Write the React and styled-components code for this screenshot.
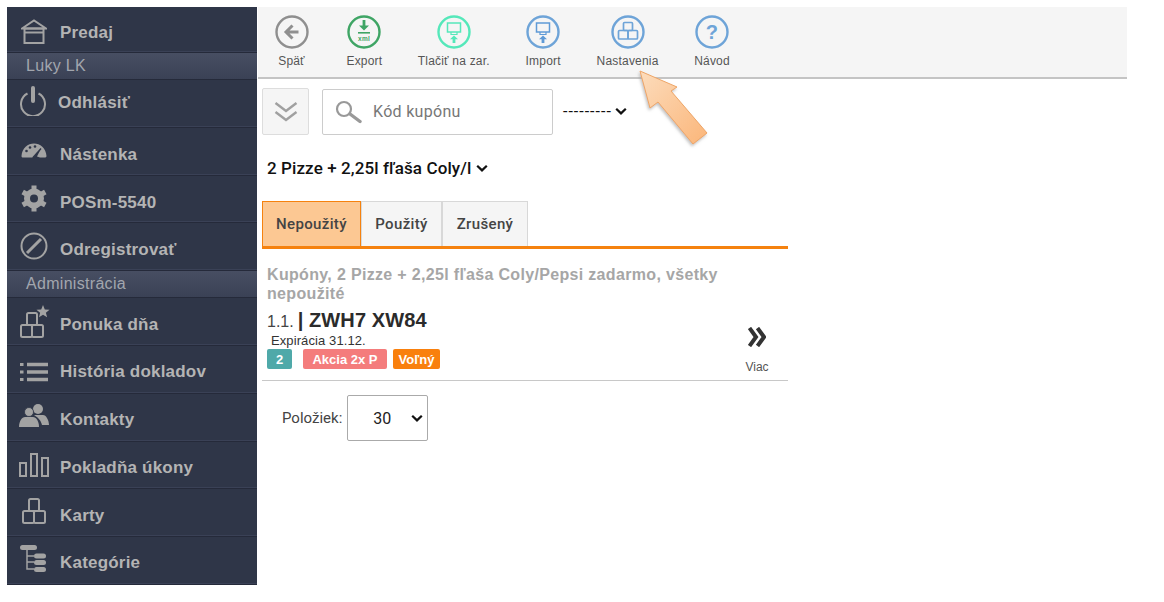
import styled, { createGlobalStyle } from 'styled-components';

const GlobalStyle = createGlobalStyle`
  html, body {
    margin: 0;
    padding: 0;
    background: #fff;
    font-family: "Liberation Sans", Arial, sans-serif;
  }
`;

const Page = styled.div`
  position: relative;
  display: flex;
  align-items: flex-start;
  gap: 1px;
  width: 1164px;
  height: 602px;
  padding: 7px 0 0 7px;
  box-sizing: border-box;
  overflow: hidden;
`;

const Sidebar = styled.nav`
  width: 250px;
  flex: none;
  background: #2f3648;
`;

const NavRow = styled.div`
  display: flex;
  align-items: center;
  height: ${props => props.$height || 47.8}px;
  box-sizing: border-box;
  border-bottom: 1px solid #252a3a;
  box-shadow: inset 0 -1px 0 #3a4156;
  color: #b4b4b4;
  font-size: 17px;
  font-weight: 700;
`;

const NavIcon = styled.span`
  display: flex;
  justify-content: center;
  width: ${props => props.$slot || 53}px;
  flex: none;
  transform: translateY(${props => props.$shift || 0}px);
`;

const NavLabel = styled.span`
  transform: translateY(${props => props.$shift || 0}px);
  letter-spacing: 0.2px;
`;

const SectionRow = styled.div`
  display: flex;
  align-items: center;
  height: 27px;
  box-sizing: border-box;
  padding-left: 19px;
  background: linear-gradient(#474e62, #3a4155);
  border-bottom: 1px solid #252a3a;
  color: #a2a6ae;
  font-size: 16px;
  letter-spacing: 0.3px;
`;

const Main = styled.main`
  width: 869px;
  flex: none;
`;

const Toolbar = styled.div`
  display: flex;
  height: 72px;
  box-sizing: border-box;
  padding: 7px 0 0 14px;
  background: #f5f5f5;
  border-bottom: 2px solid #c4c4c4;
`;

const ToolButton = styled.div`
  display: flex;
  flex-direction: column;
  align-items: center;
  min-width: ${props => props.$minWidth || 0}px;
  margin-right: 35.4px;
  color: #555;
  font-size: 12px;
  letter-spacing: 0.2px;
  white-space: nowrap;
`;

const ToolIcon = styled.svg`
  width: 36px;
  height: 36px;
  margin-bottom: 4px;
`;

const Content = styled.div`
  display: flex;
  flex-direction: column;
  width: 526px;
  margin-left: 4px;
  font-family: Roboto, "Liberation Sans", sans-serif;
`;

const FilterRow = styled.div`
  display: flex;
  align-items: center;
  margin-top: 9px;
`;

const CollapseButton = styled.div`
  display: flex;
  align-items: center;
  justify-content: center;
  width: 47px;
  height: 47px;
  box-sizing: border-box;
  background: #f5f5f5;
  border: 1px solid #ddd;
  border-radius: 2px;
`;

const SearchBox = styled.div`
  display: flex;
  align-items: center;
  gap: 11px;
  width: 231px;
  height: 46px;
  box-sizing: border-box;
  margin-left: 13px;
  padding-left: 12px;
  border: 1px solid #ccc;
  border-radius: 2px;
  color: #777;
  font-size: 16px;
  letter-spacing: 0.3px;
`;

const InlineSelect = styled.div`
  display: flex;
  align-items: center;
  gap: ${props => props.$gap || 0}px;
  margin: ${props => props.$margin || 0};
  color: #111;
  font-size: ${props => props.$size || 16}px;
  font-weight: ${props => props.$weight || 400};
  letter-spacing: ${props => props.$spacing || 0}px;
`;

const Tabs = styled.div`
  display: flex;
  height: 48px;
  box-sizing: border-box;
  margin-top: 23px;
  border-bottom: 3px solid #f5820f;
`;

const Tab = styled.div`
  display: flex;
  align-items: center;
  justify-content: center;
  width: ${props => props.$width}px;
  box-sizing: border-box;
  background: ${props => (props.$active ? '#fcc893' : '#f5f5f5')};
  border: 1px solid ${props => (props.$active ? '#f5820f' : '#d8d8d8')};
  border-bottom: none;
  color: #444;
  font-size: 15px;
  font-weight: 500;
  letter-spacing: 0.35px;
`;

const Heading = styled.h2`
  width: 490px;
  margin: 16px 0 0 5px;
  color: #a6a6a6;
  font-family: "Liberation Sans", Arial, sans-serif;
  font-size: 16px;
  font-weight: 700;
  line-height: 19px;
  letter-spacing: 0.33px;
`;

const CouponRow = styled.div`
  display: flex;
  justify-content: space-between;
  height: 72px;
  box-sizing: border-box;
  margin-top: 6px;
  padding-left: 5px;
  border-bottom: 1px solid #c8c8c8;
  font-family: "Liberation Sans", Arial, sans-serif;
`;

const CouponInfo = styled.div`
  display: flex;
  flex-direction: column;
`;

const CouponTitle = styled.div`
  display: flex;
  align-items: baseline;
  gap: 4px;
  height: 23px;
  color: #444;
  font-size: 16px;
`;

const CouponCode = styled.strong`
  color: #2b2b2b;
  font-size: 20px;
  letter-spacing: 0.1px;
`;

const Expiry = styled.div`
  margin: 2px 0 1px 4px;
  color: #333;
  font-size: 13px;
  line-height: 14px;
  letter-spacing: 0.1px;
`;

const Badges = styled.div`
  display: flex;
`;

const Badge = styled.span`
  display: flex;
  align-items: center;
  justify-content: center;
  width: ${props => props.$width}px;
  height: 20px;
  margin-right: ${props => props.$gap}px;
  background: ${props => props.$color};
  border-radius: 2px;
  color: #fff;
  font-size: 13px;
  font-weight: 700;
`;

const MoreLink = styled.div`
  display: flex;
  flex-direction: column;
  align-items: center;
  width: 26px;
  margin: 18px 18px 0 0;
  color: #555;
  font-size: 12px;
`;

const MoreIcon = styled.svg`
  width: 18px;
  height: 20px;
  margin-bottom: 13px;
`;

const PageSizeRow = styled.div`
  display: flex;
  align-items: center;
  gap: 5px;
  margin: 14px 0 0 20px;
  color: #444;
  font-size: 15px;
`;

const PageSizeBox = styled.div`
  display: flex;
  align-items: center;
  justify-content: space-between;
  width: 81px;
  height: 46px;
  box-sizing: border-box;
  padding: 0 4px 0 25px;
  border: 1px solid #aaa;
  border-radius: 2px;
  color: #222;
  font-size: 16px;
`;

const CalloutArrow = styled.svg`
  position: absolute;
  left: 630px;
  top: 60px;
  width: 90px;
  height: 95px;
`;

const Chevron = ({ size = 12 }) => (
  <svg width={size} height={size * 0.7} viewBox="0 0 12 8">
    <path d="M1.2 1.5 6 6.2l4.8-4.7" fill="none" stroke="#111" strokeWidth="2.2" />
  </svg>
);

const GREY = '#a3a3a3';
const BG = '#2f3648';
const line = { fill: 'none', stroke: GREY, strokeWidth: 2 };

const boxes = (
  <g {...line}>
    <rect x="9" y="2" width="10" height="12" rx="1.5" />
    <rect x="3" y="14" width="11" height="12" rx="1.5" />
    <rect x="14" y="14" width="11" height="12" rx="1.5" />
  </g>
);

const NavIcons = {
  home: (
    <svg width="26" height="26" viewBox="0 0 26 26">
      <path d="M1 9.5 13 1.5l12 8z" {...line} />
      <rect x="3.5" y="9.5" width="19" height="14.5" {...line} />
      <path d="M3.5 13.5h19" {...line} />
    </svg>
  ),
  power: (
    <svg width="28" height="30" viewBox="0 0 28 30">
      <path d="M8.5 7.5a12 12 0 1 0 11 0" {...line} />
      <path d="M14 2v13" stroke={GREY} strokeWidth="4" strokeLinecap="round" />
    </svg>
  ),
  gauge: (
    <svg width="26" height="15" viewBox="0 0 26 15">
      <path d="M.5 13C1 5 7 .5 13 .5S25 5 25.5 13c0 1-1 1.5-2 1.5H19l-3-1 4-8-7 8-2 1H2.5C1 14.5.5 14 .5 13z" fill={GREY} />
      <circle cx="5.5" cy="8" r="1.3" fill={BG} />
      <circle cx="9" cy="4.5" r="1.3" fill={BG} />
      <circle cx="14" cy="3.5" r="1.3" fill={BG} />
      <path d="M12 14.5 20 5.5" stroke={BG} strokeWidth="1.3" />
    </svg>
  ),
  gear: (
    <svg width="26" height="27" viewBox="0 0 26 26">
      <circle cx="13" cy="13" r="7" fill="none" stroke={GREY} strokeWidth="6" />
      <g stroke={GREY} strokeWidth="5">
        <path d="M13 0v5M13 21v5M1.7 6.5l4.4 2.5M19.9 17l4.4 2.5M1.7 19.5 6.1 17M19.9 9l4.4-2.5" />
      </g>
    </svg>
  ),
  cancel: (
    <svg width="28" height="28" viewBox="0 0 28 28">
      <circle cx="14" cy="14" r="12.5" {...line} />
      <path d="M7 21 21 7" stroke={GREY} strokeWidth="3" />
    </svg>
  ),
  boxesStar: (
    <svg width="32" height="34" viewBox="0 0 32 34">
      <g transform="translate(0 6)">{boxes}</g>
      <path d="m25 0 1.8 4.4 4.7.3-3.6 3 1.2 4.6-4.1-2.5-4 2.5 1.1-4.6-3.6-3 4.7-.3z" fill={GREY} />
    </svg>
  ),
  list: (
    <svg width="28" height="20" viewBox="0 0 28 20">
      <path d="M7 2.5h21M7 10h21M7 17.5h21" stroke={GREY} strokeWidth="3.4" />
      <path d="M0 2.5h3.500M0 10h3.500M0 17.5h3.500" stroke={GREY} strokeWidth="3" />
    </svg>
  ),
  people: (
    <svg width="30" height="23" viewBox="0 0 30 23">
      <circle cx="19" cy="5" r="5" fill={GREY} />
      <path d="M15 11h9c3 0 6 5 6 10h-7c-1-4-3-7-8-10z" fill={GREY} />
      <circle cx="10" cy="8" r="4.5" fill={GREY} stroke={BG} strokeWidth="0.8" />
      <path d="M0 23c0-6 3-10 6-10h8c3 0 6 4 6 10z" fill={GREY} />
    </svg>
  ),
  bars: (
    <svg width="30" height="24" viewBox="0 0 30 24">
      <g {...line}>
        <rect x="1" y="10" width="6" height="13" />
        <rect x="12" y="1" width="6" height="22" />
        <rect x="23" y="5" width="6" height="18" />
      </g>
    </svg>
  ),
  boxes: (
    <svg width="28" height="28" viewBox="0 0 28 28">
      {boxes}
    </svg>
  ),
  tree: (
    <svg width="28" height="30" viewBox="0 0 28 30">
      <path d="M7 6v19h7M7 12h7M7 18h7" fill="none" stroke={GREY} strokeWidth="1.5" />
      <rect x="0" y="1" width="17" height="5" rx="2.5" fill={GREY} />
      <rect x="14" y="9.5" width="12" height="5" rx="2.5" fill={GREY} />
      <rect x="14" y="16" width="12" height="5" rx="2.5" fill={GREY} />
      <rect x="14" y="23" width="12" height="5" rx="2.5" fill={GREY} />
    </svg>
  ),
};

const navTop = [
  { icon: 'power', label: 'Odhlásiť', slot: 51, iconShift: -2, shift: 0 },
  { icon: 'gauge', label: 'Nástenka', iconShift: -1, shift: 4 },
  { icon: 'gear', label: 'POSm-5540', shift: 4 },
  { icon: 'cancel', label: 'Odregistrovať', iconShift: -1, shift: 3 },
];

const navAdmin = [
  { icon: 'boxesStar', label: 'Ponuka dňa', shift: 3 },
  { icon: 'list', label: 'História dokladov', iconShift: 3, shift: 3 },
  { icon: 'people', label: 'Kontakty', iconShift: -2, shift: 3 },
  { icon: 'bars', label: 'Pokladňa úkony', shift: 3 },
  { icon: 'boxes', label: 'Karty', iconShift: -2, shift: 3 },
  { icon: 'tree', label: 'Kategórie', iconShift: -2, shift: 2 },
];

const renderNav = item => (
  <NavRow key={item.label}>
    <NavIcon $slot={item.slot} $shift={item.iconShift}>
      {NavIcons[item.icon]}
    </NavIcon>
    <NavLabel $shift={item.shift}>{item.label}</NavLabel>
  </NavRow>
);

const screenUp = color => (
  <g>
    <rect x="11.5" y="9" width="13" height="9" fill="none" stroke={color} strokeWidth="1.5" />
    <path d="M15 18v2.5h6V18" fill="none" stroke={color} strokeWidth="1.2" />
    <path d="M18 21.5l-4 3.8h2.6V29h2.8v-3.700H22z" fill={color} />
  </g>
);

const tools = [
  {
    label: 'Späť',
    color: '#8f8f8f',
    minWidth: 39,
    art: <path d="M18.5 11.5 12 18l6.500 6.500M12.500 18h12" fill="none" stroke="#8f8f8f" strokeWidth="3" />,
  },
  {
    label: 'Export',
    color: '#3fa565',
    art: (
      <g fill="#3fa565">
        <path d="M16.6 6h2.8v5.500H23L18 16.500l-5-5h3.600z" />
        <rect x="12" y="18" width="12" height="1.6" />
        <text x="18" y="27" fontSize="6.5" fontWeight="700" textAnchor="middle" fontFamily="Liberation Sans, sans-serif">
          xml
        </text>
      </g>
    ),
  },
  { label: 'Tlačiť na zar.', color: '#55e8ba', art: screenUp('#55e8ba') },
  { label: 'Import', color: '#6ea4d8', art: screenUp('#5f9ad6') },
  {
    label: 'Nastavenia',
    color: '#6ea4d8',
    art: (
      <g fill="none" stroke="#6ea4d8" strokeWidth="1.7">
        <rect x="13.5" y="8.5" width="9" height="8" rx="1" />
        <rect x="8.5" y="16.5" width="9.5" height="8.5" rx="1" />
        <rect x="18" y="16.5" width="9.5" height="8.5" rx="1" />
      </g>
    ),
  },
  {
    label: 'Návod',
    color: '#6ea4d8',
    art: (
      <text x="18" y="25" fontSize="20" fontWeight="700" fill="#6ea4d8" textAnchor="middle" fontFamily="Liberation Sans, sans-serif">
        ?
      </text>
    ),
  },
];

const App = () => {
  return (
    <Page>
      <GlobalStyle />
      <Sidebar>
        <NavRow $height={46}>
          <NavIcon $shift={2}>{NavIcons.home}</NavIcon>
          <NavLabel $shift={3}>Predaj</NavLabel>
        </NavRow>
        <SectionRow>Luky LK</SectionRow>
        {navTop.map(renderNav)}
        <SectionRow>Administrácia</SectionRow>
        {navAdmin.map(renderNav)}
      </Sidebar>
      <Main>
        <Toolbar>
          {tools.map(tool => (
            <ToolButton key={tool.label} $minWidth={tool.minWidth}>
              <ToolIcon viewBox="0 0 36 36">
                <circle cx="18" cy="18" r="15.5" fill="none" stroke={tool.color} strokeWidth="2.4" />
                {tool.art}
              </ToolIcon>
              {tool.label}
            </ToolButton>
          ))}
        </Toolbar>
        <Content>
          <FilterRow>
            <CollapseButton>
              <svg width="24" height="22" viewBox="0 0 24 22">
                <path d="M1.5 2 12 10 22.500 2M1.500 11 12 19 22.500 11" fill="none" stroke="#a0a0a0" strokeWidth="2.4" />
              </svg>
            </CollapseButton>
            <SearchBox>
              <svg width="27" height="24" viewBox="0 0 27 24">
                <circle cx="9" cy="9" r="7" fill="none" stroke="#999" strokeWidth="2.2" />
                <path d="M15 14l10 7.500" stroke="#999" strokeWidth="3.4" strokeLinecap="round" />
              </svg>
              Kód kupónu
            </SearchBox>
            <InlineSelect $margin="-1px 0 0 10px" $gap={3} $spacing={1}>
              ---------
              <Chevron />
            </InlineSelect>
          </FilterRow>
          <InlineSelect $margin="23px 0 0 5px" $size={17} $weight={500} $gap={5} $spacing={0.1}>
            2 Pizze + 2,25l fľaša Coly/l
            <Chevron />
          </InlineSelect>
          <Tabs>
            <Tab $active $width={99}>Nepoužitý</Tab>
            <Tab $width={81}>Použitý</Tab>
            <Tab $width={86}>Zrušený</Tab>
          </Tabs>
          <Heading>Kupóny, 2 Pizze + 2,25l fľaša Coly/Pepsi zadarmo, všetky nepoužité</Heading>
          <CouponRow>
            <CouponInfo>
              <CouponTitle>
                1.1. <CouponCode>| ZWH7 XW84</CouponCode>
              </CouponTitle>
              <Expiry>Expirácia 31.12.</Expiry>
              <Badges>
                <Badge $width={25} $gap={11} $color="#4fa9a9">2</Badge>
                <Badge $width={84} $gap={6} $color="#f47c7c">Akcia 2x P</Badge>
                <Badge $width={47} $gap={0} $color="#f9800d">Voľný</Badge>
              </Badges>
            </CouponInfo>
            <MoreLink>
              <MoreIcon viewBox="0 0 18 20">
                <path d="M1.500 1 8 10l-6.500 9M9.500 1 16 10l-6.500 9" fill="none" stroke="#333" strokeWidth="4" />
              </MoreIcon>
              Viac
            </MoreLink>
          </CouponRow>
          <PageSizeRow>
            Položiek:
            <PageSizeBox>
              30
              <Chevron />
            </PageSizeBox>
          </PageSizeRow>
        </Content>
      </Main>
      <CalloutArrow viewBox="630 60 90 95">
        <defs>
          <linearGradient id="calloutFill" x1="0" y1="0" x2="1" y2="1">
            <stop offset="0" stopColor="#fcdcbc" />
            <stop offset="1" stopColor="#fbb67a" />
          </linearGradient>
          <filter id="calloutShadow" x="-20%" y="-20%" width="140%" height="140%">
            <feDropShadow dx="-1" dy="2" stdDeviation="1.5" floodColor="#999" floodOpacity="0.6" />
          </filter>
        </defs>
        <path
          d="M640 71 677 87 671 91 707 133 693 144 658 102 650 108Z"
          fill="url(#calloutFill)"
          stroke="#eea566"
          strokeWidth="1"
          filter="url(#calloutShadow)"
        />
      </CalloutArrow>
    </Page>
  );
};

export default App;
